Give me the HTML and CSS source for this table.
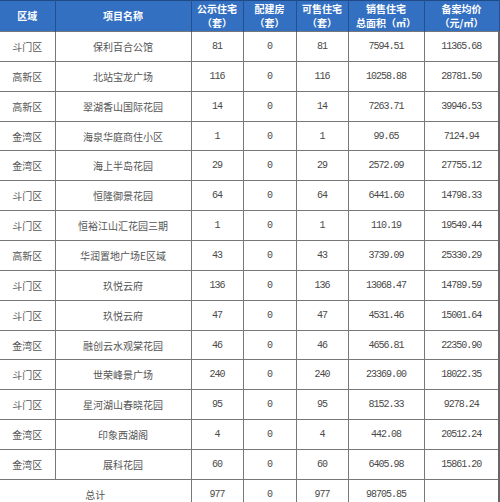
FILE: index.html
```html
<!DOCTYPE html>
<html lang="zh">
<head>
<meta charset="utf-8">
<link rel="stylesheet" href="styles.css">
</head>
<body>
<table class="sales">
<colgroup>
<col class="c-area"><col class="c-name"><col class="c-pub"><col class="c-cfg"><col class="c-sale"><col class="c-size"><col class="c-price">
</colgroup>
<thead>
<tr>
<th>区域</th>
<th>项目名称</th>
<th><span class="ln">公示住宅</span><span class="ln">（套）</span></th>
<th><span class="ln">配建房</span><span class="ln">（套）</span></th>
<th><span class="ln">可售住宅</span><span class="ln">（套）</span></th>
<th><span class="ln">销售住宅</span><span class="ln">总面积（㎡）</span></th>
<th><span class="ln">备案均价</span><span class="ln">（元/㎡）</span></th>
</tr>
</thead>
<tbody>
<tr><td class="zh">斗门区</td><td class="zh">保利百合公馆</td><td>81</td><td>0</td><td>81</td><td>7594.51</td><td>11365.68</td></tr>
<tr><td class="zh">高新区</td><td class="zh">北站宝龙广场</td><td>116</td><td>0</td><td>116</td><td>10258.88</td><td>28781.50</td></tr>
<tr><td class="zh">高新区</td><td class="zh">翠湖香山国际花园</td><td>14</td><td>0</td><td>14</td><td>7263.71</td><td>39946.53</td></tr>
<tr><td class="zh">金湾区</td><td class="zh">海泉华庭商住小区</td><td>1</td><td>0</td><td>1</td><td>99.65</td><td>7124.94</td></tr>
<tr><td class="zh">金湾区</td><td class="zh">海上半岛花园</td><td>29</td><td>0</td><td>29</td><td>2572.09</td><td>27755.12</td></tr>
<tr><td class="zh">斗门区</td><td class="zh">恒隆御景花园</td><td>64</td><td>0</td><td>64</td><td>6441.60</td><td>14798.33</td></tr>
<tr><td class="zh">斗门区</td><td class="zh">恒裕江山汇花园三期</td><td>1</td><td>0</td><td>1</td><td>110.19</td><td>19549.44</td></tr>
<tr><td class="zh">高新区</td><td class="zh">华润置地广场E区域</td><td>43</td><td>0</td><td>43</td><td>3739.09</td><td>25330.29</td></tr>
<tr><td class="zh">斗门区</td><td class="zh">玖悦云府</td><td>136</td><td>0</td><td>136</td><td>13068.47</td><td>14789.59</td></tr>
<tr><td class="zh">斗门区</td><td class="zh">玖悦云府</td><td>47</td><td>0</td><td>47</td><td>4531.46</td><td>15001.64</td></tr>
<tr><td class="zh">金湾区</td><td class="zh">融创云水观棠花园</td><td>46</td><td>0</td><td>46</td><td>4656.81</td><td>22350.90</td></tr>
<tr><td class="zh">斗门区</td><td class="zh">世荣峰景广场</td><td>240</td><td>0</td><td>240</td><td>23369.00</td><td>18022.35</td></tr>
<tr><td class="zh">斗门区</td><td class="zh">星河湖山春晓花园</td><td>95</td><td>0</td><td>95</td><td>8152.33</td><td>9278.24</td></tr>
<tr><td class="zh">金湾区</td><td class="zh">印象西湖阁</td><td>4</td><td>0</td><td>4</td><td>442.08</td><td>20512.24</td></tr>
<tr><td class="zh">金湾区</td><td class="zh">展科花园</td><td>60</td><td>0</td><td>60</td><td>6405.98</td><td>15861.20</td></tr>
<tr class="total"><td class="zh" colspan="2">总计</td><td>977</td><td>0</td><td>977</td><td>98705.85</td><td></td></tr>
</tbody>
</table>
</body>
</html>
```
FILE: styles.css
```css
html, body {
  margin: 0;
  padding: 0;
  background: #ffffff;
}

.sales {
  width: 499px;
  table-layout: fixed;
  border-collapse: collapse;
  font-family: "Liberation Mono", "Noto Sans CJK SC", monospace;
  font-size: 10px;
  color: #4a4a4a;
}

.c-area { width: 55px; }
.c-name { width: 136px; }
.c-pub { width: 52px; }
.c-cfg { width: 53px; }
.c-sale { width: 52px; }
.c-size { width: 76px; }
.c-price { width: 75px; }

.sales th {
  height: 30px;
  padding: 0;
  background: #3370c2;
  color: #ffffff;
  font-family: "Noto Sans CJK SC", sans-serif;
  font-weight: 700;
  font-size: 10px;
  line-height: 14px;
  border-left: 1px solid #23508f;
  border-right: 1px solid #23508f;
  border-top: 1px solid #1f4a86;
  text-align: center;
  vertical-align: middle;
  white-space: nowrap;
}

.sales th .ln {
  display: block;
  line-height: 14px;
}

.sales th:first-child {
  border-left: none;
}

.sales td {
  height: 28.87px;
  padding: 0;
  border: 1px solid #777777;
  text-align: center;
  vertical-align: middle;
  letter-spacing: -1px;
  white-space: nowrap;
}

.sales td:first-child {
  border-left: none;
}

.sales td:last-child {
  border-right: 2px solid #666666;
}

.sales td.zh {
  font-family: "Noto Sans CJK SC", sans-serif;
  letter-spacing: 0;
  color: #555555;
}
```
